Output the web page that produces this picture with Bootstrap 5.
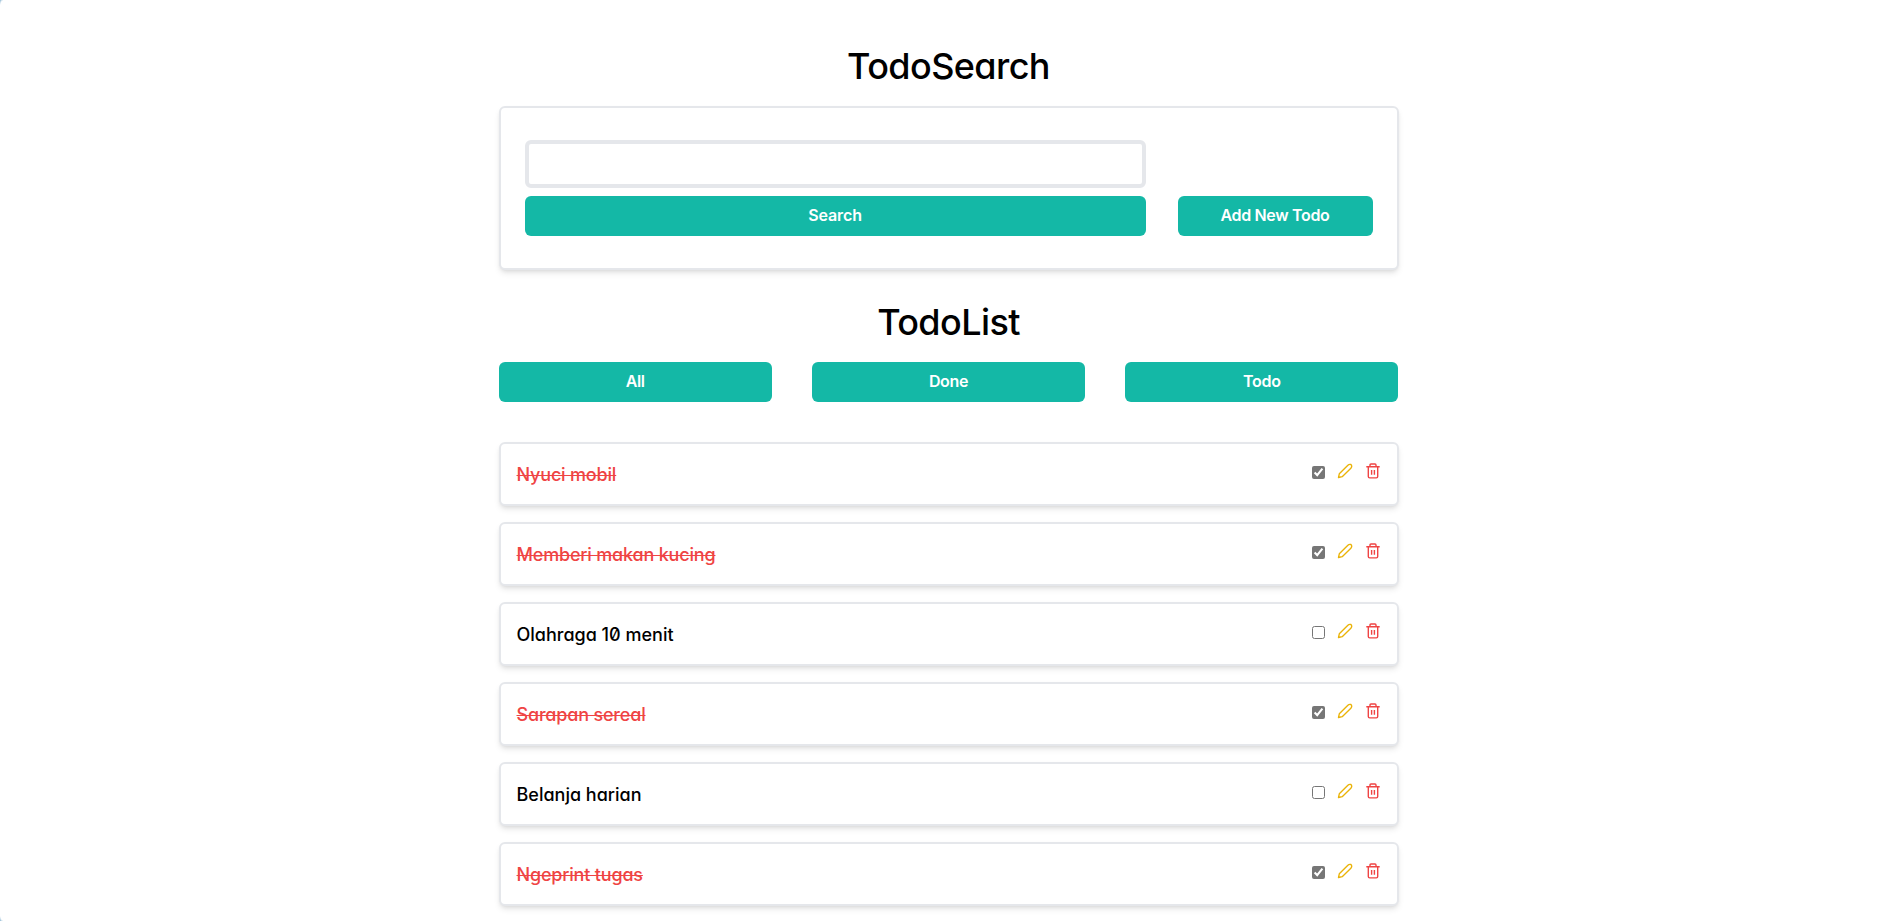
<!DOCTYPE html>
<html lang="id">
<head>
<meta charset="utf-8">
<meta name="viewport" content="width=device-width, initial-scale=1">
<title>TodoSearch</title>
<link href="https://cdn.jsdelivr.net/npm/bootstrap@5.3.0/dist/css/bootstrap.min.css" rel="stylesheet">
<style>
  html, body { height: 100%; overflow: hidden; }
  body { color: #000; background: #fff; font-family: Inter, sans-serif; font-feature-settings: "cv11", "zero"; }
  .page { width: 900px; padding-top: 46px; }
  .title { font-size: 36px; line-height: 40px; font-weight: 500; letter-spacing: -.6px; margin: 0; }
  .panel { border: 2px solid #e5e7eb; border-radius: 6px; background: #fff;
    box-shadow: 0 4px 6px -1px rgba(0,0,0,.1), 0 2px 4px -2px rgba(0,0,0,.1); }
  .search-panel { padding: 32px 24px; gap: 32px; margin-top: 20px; margin-bottom: 32px; }
  .search-box { height: 48px; border: 4px solid #e5e7eb; border-radius: 6px; }
  .btn-teal { --bs-btn-color: #fff; --bs-btn-bg: #14b8a6; --bs-btn-hover-color: #fff; --bs-btn-hover-bg: #0d9488;
    --bs-btn-border-width: 0; --bs-btn-border-radius: 6px; --bs-btn-font-weight: 600; height: 40px;
    padding-top: 7px; padding-bottom: 9px; letter-spacing: -.33px; }
  .btn-search { letter-spacing: -.1px; }
  .btn-add { width: 195px; }
  .filters { gap: 40px; margin-top: 20px; margin-bottom: 40px; }
  .todo { height: 64px; padding: 0 15.5px 0 16px; font-size: 18px; font-weight: 550; letter-spacing: -.18px; }
  .todo-open { letter-spacing: 0; }
  .done { color: #ef4444; text-decoration: line-through; text-decoration-thickness: 1px; }
  .check { width: 13px; height: 13px; margin: 3px 12px 0 0; accent-color: #767676; }
  .tools { padding-bottom: 6px; }
  .edit { color: #eab308; margin-right: 12px; }
  .trash { color: #ef4444; }
  .corner { width: 3px; height: 6px; left: 0; }
  .corner-top { top: 0; background: radial-gradient(ellipse at 100% 100%, #fff 60%, #8fb9d3 95%); }
  .corner-bottom { bottom: 0; background: radial-gradient(ellipse at 100% 0, #fff 60%, #8fb9d3 95%); }
</style>
</head>
<body>
<svg class="d-none">
  <symbol id="pencil" viewBox="0 0 16 16"><path d="M1.5 14.5 2.3 10.8 10.9 2.2Q12.1 1 13.9 1.5 15.4 2.9 14.1 5L5.2 13.7Z" fill="none" stroke="currentColor" stroke-width="1.35" stroke-linejoin="round"/></symbol>
  <symbol id="trash" viewBox="0 0 16 16"><path d="M1.3 3.7h13.4M5 3.5V2q0-1 1-1h4q1 0 1 1v1.5M3.3 4v9.5q0 1.4 1.4 1.4h6.6q1.4 0 1.4-1.4V4M6.6 7v4.7M9.4 7v4.7" fill="none" stroke="currentColor" stroke-width="1.4"/></symbol>
</svg>
<div class="corner corner-top position-absolute"></div>
<div class="corner corner-bottom position-absolute"></div>
<main class="page mx-auto">
  <h1 class="title text-center">TodoSearch</h1>
  <section class="panel search-panel d-flex align-items-end">
    <form class="flex-grow-1 d-flex flex-column gap-2">
      <input class="search-box w-100" type="text" aria-label="Search">
      <button type="button" class="btn btn-teal btn-search w-100">Search</button>
    </form>
    <button type="button" class="btn btn-teal btn-add">Add New Todo</button>
  </section>
  <h1 class="title text-center">TodoList</h1>
  <div class="filters d-flex">
    <button type="button" class="btn btn-teal w-100">All</button>
    <button type="button" class="btn btn-teal w-100">Done</button>
    <button type="button" class="btn btn-teal w-100">Todo</button>
  </div>
  <div class="d-flex flex-column gap-3">
    <div class="panel todo d-flex align-items-center justify-content-between"><span class="done">Nyuci mobil</span><div class="tools d-flex align-items-center"><input class="check" type="checkbox" checked><svg class="edit" width="16" height="16"><use href="#pencil"/></svg><svg class="trash" width="16" height="16"><use href="#trash"/></svg></div></div>
    <div class="panel todo d-flex align-items-center justify-content-between"><span class="done">Memberi makan kucing</span><div class="tools d-flex align-items-center"><input class="check" type="checkbox" checked><svg class="edit" width="16" height="16"><use href="#pencil"/></svg><svg class="trash" width="16" height="16"><use href="#trash"/></svg></div></div>
    <div class="panel todo todo-open d-flex align-items-center justify-content-between"><span>Olahraga 10 menit</span><div class="tools d-flex align-items-center"><input class="check" type="checkbox"><svg class="edit" width="16" height="16"><use href="#pencil"/></svg><svg class="trash" width="16" height="16"><use href="#trash"/></svg></div></div>
    <div class="panel todo d-flex align-items-center justify-content-between"><span class="done">Sarapan sereal</span><div class="tools d-flex align-items-center"><input class="check" type="checkbox" checked><svg class="edit" width="16" height="16"><use href="#pencil"/></svg><svg class="trash" width="16" height="16"><use href="#trash"/></svg></div></div>
    <div class="panel todo todo-open d-flex align-items-center justify-content-between"><span>Belanja harian</span><div class="tools d-flex align-items-center"><input class="check" type="checkbox"><svg class="edit" width="16" height="16"><use href="#pencil"/></svg><svg class="trash" width="16" height="16"><use href="#trash"/></svg></div></div>
    <div class="panel todo d-flex align-items-center justify-content-between"><span class="done">Ngeprint tugas</span><div class="tools d-flex align-items-center"><input class="check" type="checkbox" checked><svg class="edit" width="16" height="16"><use href="#pencil"/></svg><svg class="trash" width="16" height="16"><use href="#trash"/></svg></div></div>
  </div>
</main>
<script src="https://cdn.jsdelivr.net/npm/bootstrap@5.3.0/dist/js/bootstrap.bundle.min.js"></script>
</body>
</html>
